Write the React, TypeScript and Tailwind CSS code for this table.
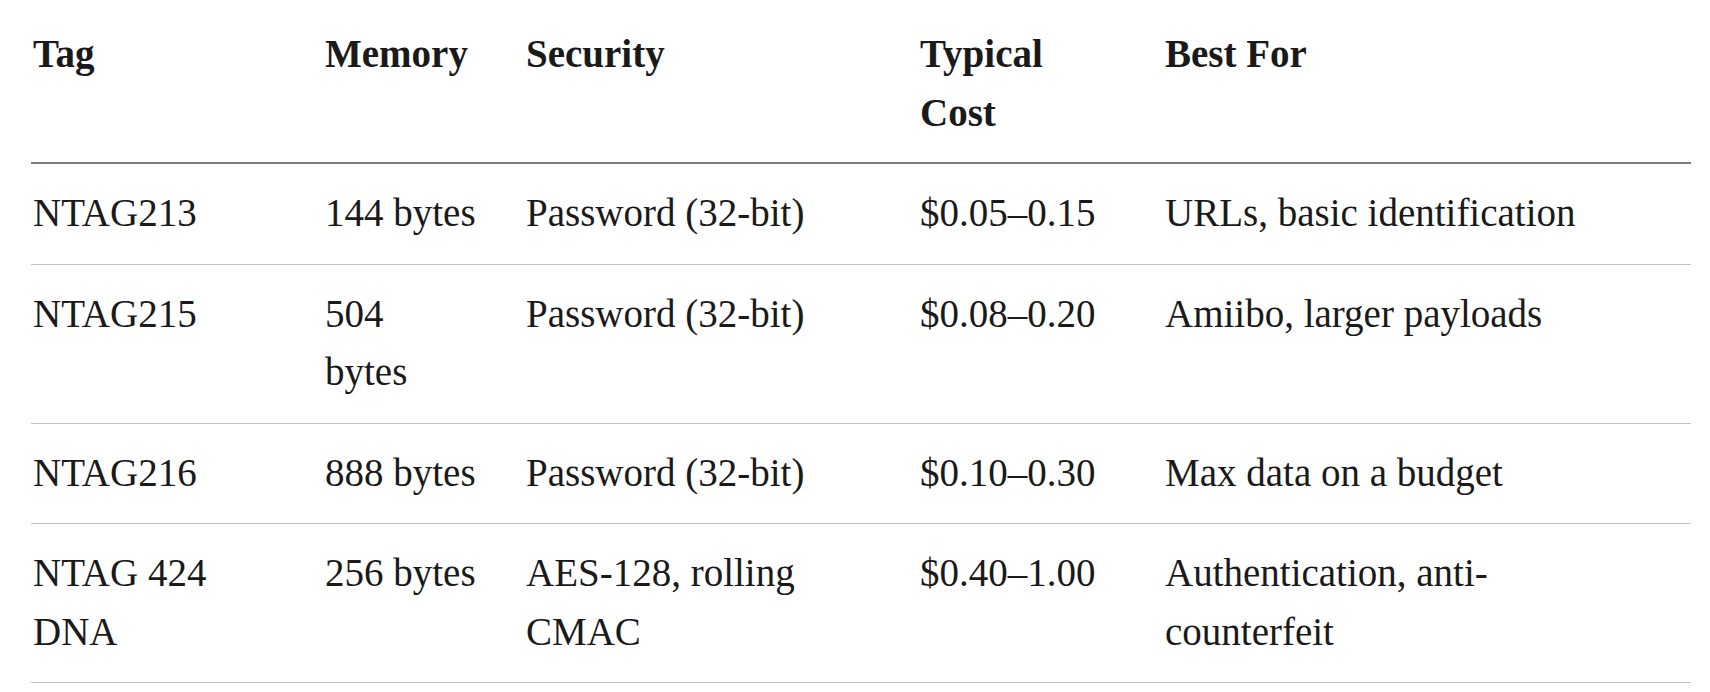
const headers = [["Tag"], ["Memory"], ["Security"], ["Typical", "Cost"], ["Best For"]];

const rows: string[][][] = [
  [["NTAG213"], ["144 bytes"], ["Password (32-bit)"], ["$0.05–0.15"], ["URLs, basic identification"]],
  [["NTAG215"], ["504", "bytes"], ["Password (32-bit)"], ["$0.08–0.20"], ["Amiibo, larger payloads"]],
  [["NTAG216"], ["888 bytes"], ["Password (32-bit)"], ["$0.10–0.30"], ["Max data on a budget"]],
  [["NTAG 424", "DNA"], ["256 bytes"], ["AES-128, rolling", "CMAC"], ["$0.40–1.00"], ["Authentication, anti-", "counterfeit"]],
];

function Lines({ lines }: { lines: string[] }) {
  return (
    <>
      {lines.map((l, i) => (
        <span key={i} className="block whitespace-nowrap">
          {l}
        </span>
      ))}
    </>
  );
}

export default function App() {
  return (
    <div className="min-h-screen bg-white pt-[4px] pl-[31px] font-['Liberation_Serif',serif] text-[#1a1a1a]">
      <table className="w-[1660px] table-fixed border-collapse text-left text-[39px] leading-[58.5px]">
        <colgroup>
          <col className="w-[292px]" />
          <col className="w-[201px]" />
          <col className="w-[394px]" />
          <col className="w-[245px]" />
          <col className="w-[528px]" />
        </colgroup>
        <thead>
          <tr className="border-b-2 border-[#7d7d7d]">
            {headers.map((h, i) => (
              <th key={i} className="pl-[2px] pt-[21px] pb-[20px] align-top font-bold">
                <Lines lines={h} />
              </th>
            ))}
          </tr>
        </thead>
        <tbody>
          {rows.map((r, i) => (
            <tr key={i} className="border-b-[1.5px] border-[#c2c2c2]">
              {r.map((c, j) => (
                <td key={j} className="pl-[2px] pt-[20px] pb-[21px] align-top">
                  <Lines lines={c} />
                </td>
              ))}
            </tr>
          ))}
        </tbody>
      </table>
    </div>
  );
}
